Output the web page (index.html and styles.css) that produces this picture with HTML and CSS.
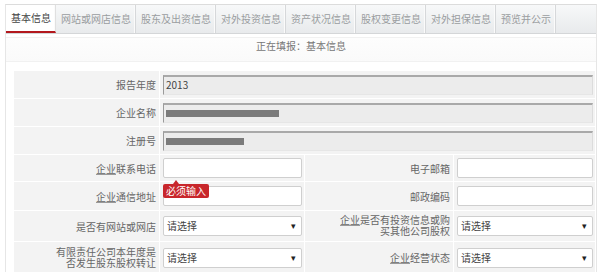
FILE: index.html
```html
<!DOCTYPE html>
<html lang="zh">
<head>
<meta charset="utf-8">
<title>基本信息</title>
<link rel="stylesheet" href="styles.css">
</head>
<body>
<div class="page">
  <ul class="tabs">
    <li class="tab active">基本信息</li>
    <li class="tab">网站或网店信息</li>
    <li class="tab">股东及出资信息</li>
    <li class="tab">对外投资信息</li>
    <li class="tab">资产状况信息</li>
    <li class="tab">股权变更信息</li>
    <li class="tab">对外担保信息</li>
    <li class="tab">预览并公示</li>
  </ul>
  <div class="status">正在填报：基本信息</div>
  <table class="form">
    <colgroup>
      <col class="c1"><col class="c2"><col class="c3"><col class="c4">
    </colgroup>
    <tr class="r27">
      <td class="lbl">报告年度</td>
      <td class="fld" colspan="3"><div class="ro">2013</div></td>
    </tr>
    <tr class="r27">
      <td class="lbl">企业名称</td>
      <td class="fld" colspan="3"><div class="ro"><span class="mask" style="width:113px"></span></div></td>
    </tr>
    <tr class="r27">
      <td class="lbl">注册号</td>
      <td class="fld" colspan="3"><div class="ro"><span class="mask" style="width:78px"></span></div></td>
    </tr>
    <tr class="r26">
      <td class="lbl"><u>企业</u>联系电话</td>
      <td class="fld"><div class="txt"></div></td>
      <td class="lbl">电子邮箱</td>
      <td class="fld"><div class="txt"></div></td>
    </tr>
    <tr class="r28">
      <td class="lbl"><u>企业</u>通信地址</td>
      <td class="fld tipcell"><div class="txt"></div><span class="tip">必须输入</span></td>
      <td class="lbl">邮政编码</td>
      <td class="fld"><div class="txt"></div></td>
    </tr>
    <tr class="r30">
      <td class="lbl">是否有网站或网店</td>
      <td class="fld"><div class="sel">请选择<span class="arr">▾</span></div></td>
      <td class="lbl two"><span class="ln"><u>企业</u>是否有投资信息或购</span><span class="ln">买其他公司股权</span></td>
      <td class="fld"><div class="sel">请选择<span class="arr">▾</span></div></td>
    </tr>
    <tr class="r31">
      <td class="lbl two"><span class="ln">有限责任公司本年度是</span><span class="ln">否发生股东股权转让</span></td>
      <td class="fld"><div class="sel">请选择<span class="arr">▾</span></div></td>
      <td class="lbl"><u>企业</u>经营状态</td>
      <td class="fld"><div class="sel">请选择<span class="arr">▾</span></div></td>
    </tr>
  </table>
</div>
</body>
</html>
```
FILE: styles.css
```css
html, body {
  margin: 0;
  padding: 0;
  background: #fff;
}
body {
  padding-top: 4px;
  font-family: "Noto Sans CJK SC", "Noto Sans", sans-serif;
  font-size: 10px;
  color: #555;
}
.page {
  margin-left: 5px;
  width: 590px;
  height: 268px;
  border-left: 1px solid #e6e6e6;
  border-right: 1px solid #e6e6e6;
  border-top: 1px solid #dcdcdc;
}
.tabs {
  list-style: none;
  margin: 0;
  padding: 0;
  display: flex;
  height: 28px;
  background: linear-gradient(#f7f8f9, #e8eaec);
  border-bottom: 1px solid #d4d6d8;
}
.tab {
  padding: 0 4px 0 5px;
  line-height: 27px;
  color: #9a9da0;
  border-right: 1px solid #d6d8da;
  box-shadow: inset -1px 0 0 #fbfbfb;
}
.tab.active {
  background: #fff;
  color: #444;
  border-bottom: 2px solid #b3181d;
  line-height: 26px;
  border-right-color: #e0e0e0;
}
.status {
  margin-top: 3px;
  height: 25px;
  box-sizing: border-box;
  padding-top: 1px;
  line-height: 14px;
  text-align: center;
  color: #777;
  background: linear-gradient(#fdfdfd, #fafafa);
  border-top: 1px solid #f1f1f1;
  border-bottom: 1px solid #f1f1f1;
}
.form {
  margin: 8px 0 0 7px;
  width: 582px;
  table-layout: fixed;
  border-collapse: collapse;
  border: 1px solid #e4e4e4;
}
.c1 { width: 146px; }
.c2 { width: 145px; }
.c3 { width: 149px; }
.c4 { width: 142px; }
.form td {
  background: #f3f3f3;
  border: 1px solid #fff;
  padding: 0;
  vertical-align: middle;
}
.r27 td { height: 27px; }
.r26 td { height: 26px; }
.r28 td { height: 28px; }
.r30 td { height: 30px; }
.r31 td { height: 31px; }
.lbl {
  text-align: right;
  padding-right: 3px !important;
  color: #666;
  line-height: 13px;
}
.ln {
  display: block;
  height: 11px;
  line-height: 11px;
  font-family: "Liberation Sans", "Noto Sans CJK SC", sans-serif;
}
.lbl u {
  text-decoration: underline;
  text-decoration-color: #999;
}
.fld {
  padding: 0 2px 0 3px !important;
}
.ro {
  height: 20px;
  box-sizing: border-box;
  background: #ececec;
  border-top: 2px solid #a9a9a9;
  border-left: 1px solid #9a9a9a;
  border-right: 1px solid #dcdcdc;
  border-bottom: 1px solid #e6e6e6;
  padding-left: 2px;
  line-height: 16px;
  color: #444;
  display: flex;
  align-items: center;
}
.mask {
  display: block;
  height: 7px;
  background: #7b7b7b;
}
.txt {
  height: 20px;
  box-sizing: border-box;
  background: #fff;
  border: 1px solid #cfcfcf;
  border-radius: 2px;
}
.sel {
  height: 20px;
  box-sizing: border-box;
  background: #fff;
  border: 1px solid #cfcfcf;
  border-radius: 2px;
  padding: 0 5px 0 3px;
  line-height: 18px;
  color: #444;
  display: flex;
  justify-content: space-between;
}
.arr {
  font-size: 9px;
  color: #222;
}
.tipcell {
  position: relative;
}
.tip {
  position: absolute;
  left: 3px;
  top: 2px;
  padding: 0 3px;
  height: 14px;
  line-height: 14px;
  background: #c8262b;
  color: #fff;
  border-radius: 2px;
  white-space: nowrap;
}
.tip::before {
  content: "";
  position: absolute;
  left: 10px;
  top: -4px;
  border-left: 3px solid transparent;
  border-right: 3px solid transparent;
  border-bottom: 4px solid #c8262b;
}
```
